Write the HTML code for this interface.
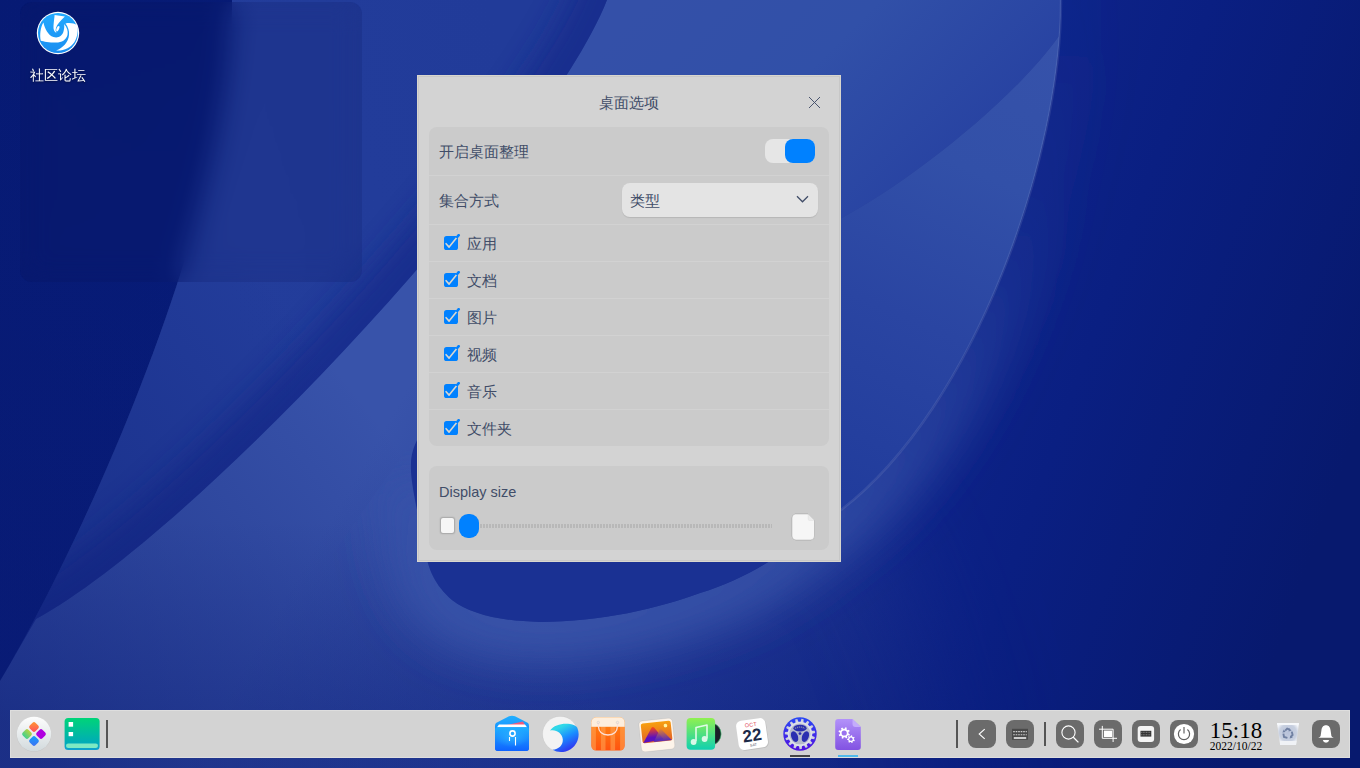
<!DOCTYPE html>
<html><head><meta charset="utf-8">
<style>
*{margin:0;padding:0;box-sizing:border-box}
html,body{width:1360px;height:768px;overflow:hidden;background:#081b78;font-family:"Liberation Sans",sans-serif}
#bg{position:absolute;left:0;top:0}
.abs{position:absolute}
.lbl{position:absolute;font-size:14.5px;line-height:20px;color:#414d68;white-space:nowrap}
.sep{position:absolute;left:429px;width:400px;height:1px;background:#d2d2d2}
.tb{position:absolute;top:720px;width:28px;height:28px;border-radius:8px;background:#6b6b6b}
</style></head><body>
<svg id="bg" width="1360" height="768" viewBox="0 0 1360 768">
<defs>
<linearGradient id="gBase" gradientUnits="userSpaceOnUse" x1="400" y1="400" x2="1000" y2="750">
<stop offset="0" stop-color="#3853aa"/><stop offset="1" stop-color="#0c2082"/>
</linearGradient>
<linearGradient id="gBot" gradientUnits="userSpaceOnUse" x1="0" y1="520" x2="0" y2="712">
<stop offset="0" stop-color="#0a1c78" stop-opacity="0"/><stop offset="1" stop-color="#0a1c78" stop-opacity="0.25"/>
</linearGradient>
<linearGradient id="gTop" gradientUnits="userSpaceOnUse" x1="650" y1="0" x2="880" y2="230">
<stop offset="0" stop-color="#3450a8"/><stop offset="0.5" stop-color="#3150a8"/><stop offset="1" stop-color="#2843a2"/>
</linearGradient>
<linearGradient id="gLens" gradientUnits="userSpaceOnUse" x1="1050" y1="40" x2="850" y2="500">
<stop offset="0" stop-color="#3652aa"/><stop offset="0.3" stop-color="#3250a8"/><stop offset="0.62" stop-color="#2a45a2"/><stop offset="1" stop-color="#213c9c"/>
</linearGradient>
<linearGradient id="gMed" gradientUnits="userSpaceOnUse" x1="200" y1="200" x2="520" y2="100">
<stop offset="0" stop-color="#233d9b"/><stop offset="1" stop-color="#213b99"/>
</linearGradient>
<linearGradient id="gDarkL" gradientUnits="userSpaceOnUse" x1="0" y1="0" x2="200" y2="600">
<stop offset="0" stop-color="#061a74"/><stop offset="1" stop-color="#071c7a"/>
</linearGradient>
<linearGradient id="gDarkR" gradientUnits="userSpaceOnUse" x1="880" y1="250" x2="1360" y2="420">
<stop offset="0" stop-color="#10268e"/><stop offset="0.45" stop-color="#0a1f82"/><stop offset="1" stop-color="#07196e"/>
</linearGradient>
<linearGradient id="gLL" gradientUnits="userSpaceOnUse" x1="420" y1="470" x2="40" y2="768">
<stop offset="0" stop-color="#0a1a70" stop-opacity="0"/><stop offset="1" stop-color="#0a1a70" stop-opacity="0.5"/>
</linearGradient>
<filter id="blur" filterUnits="userSpaceOnUse" x="-300" y="-300" width="2000" height="1400"><feGaussianBlur stdDeviation="50"/></filter>
<filter id="blurS" filterUnits="userSpaceOnUse" x="-300" y="-300" width="2000" height="1400"><feGaussianBlur stdDeviation="14"/></filter>
<linearGradient id="gTopMask" gradientUnits="userSpaceOnUse" x1="0" y1="120" x2="0" y2="330"><stop offset="0" stop-color="#fff"/><stop offset="1" stop-color="#000"/></linearGradient>
<mask id="mTop" maskUnits="userSpaceOnUse" x="0" y="-300" width="1700" height="1400"><rect x="0" y="-300" width="1700" height="1400" fill="url(#gTopMask)"/></mask>
<clipPath id="cDR"><path d="M1061,-200 L1600,-200 L1600,1000 L500,1000 L841,510 C976,407 1062,154 1061,0 Z"/></clipPath>
<clipPath id="cOut"><path d="M1061,-200 L1600,-200 L1600,1000 L300,1000 L300,600 L414,439 C411,480 418,510 424,545 C428,570 435,585 452,600 C470,614 500,621 540,622 C600,622 660,608 700,593 C760,575 800,540 841,510 C976,407 1062,154 1061,0 Z"/></clipPath>
<filter id="blurG" filterUnits="userSpaceOnUse" x="-300" y="-300" width="2000" height="1400"><feGaussianBlur stdDeviation="22"/></filter>
<linearGradient id="gGlow" gradientUnits="userSpaceOnUse" x1="0" y1="640" x2="0" y2="0"><stop offset="0" stop-color="#3a55aa" stop-opacity="0.9"/><stop offset="0.38" stop-color="#3652aa" stop-opacity="0.5"/><stop offset="0.7" stop-color="#2c48a6" stop-opacity="0.14"/><stop offset="1" stop-color="#2c48a6" stop-opacity="0.06"/></linearGradient>
<clipPath id="cMed"><path d="M232,0 L607,0 C548,151 198,531 36,619 L0,681 C84.5,540 235,205 232,0 Z"/></clipPath>
<mask id="mR" maskUnits="userSpaceOnUse" x="0" y="0" width="1360" height="768">
<path d="M600,-200 L1600,-200 L1600,1000 L1000,1000 C980,800 940,620 860,500 L600,500 Z" fill="#fff" filter="url(#blur)"/>
</mask>
</defs>
<rect width="1360" height="768" fill="url(#gBase)"/>
<path d="M607,0 L1061,0 L1059,36 C1013,101 907,184 840,219 L840,76 L560,76 Z" fill="url(#gTop)"/>
<path d="M1059,36 C1013,101 907,184 840,219 L840,510 L841,510 C976,407 1062,154 1061,0 Z" fill="url(#gLens)"/>
<rect x="0" y="520" width="1360" height="248" fill="url(#gBot)"/>
<path d="M232,0 L607,0 C548,151 198,531 36,619 L0,681 C84.5,540 235,205 232,0 Z" fill="url(#gMed)"/>
<g clip-path="url(#cMed)"><path d="M620,-40 L607,0 C548,151 198,531 36,619 L0,660" stroke="#15298a" stroke-width="70" fill="none" opacity="0.75" filter="url(#blurS)"/></g>
<path d="M0,0 L232,0 C235,205 84.5,540 0,681 Z" fill="url(#gDarkL)"/>
<rect x="0" y="0" width="1360" height="768" fill="url(#gLL)"/>
<g mask="url(#mR)"><path d="M1061,-200 L1600,-200 L1600,1000 L500,1000 L841,510 C976,407 1062,154 1061,0 Z" fill="url(#gDarkR)"/></g>
<g clip-path="url(#cOut)"><path d="M411,470 C411,480 418,510 424,545 C428,570 435,585 452,600 C470,614 500,621 540,622 C600,622 660,608 700,593 C760,575 800,540 841,510 C976,407 1062,154 1061,0 L1061,-60" stroke="url(#gGlow)" stroke-width="80" fill="none" filter="url(#blurG)"/></g>
<path d="M1061,0 C1062,154 976,407 841,510" stroke="#ffffff" stroke-opacity="0.09" stroke-width="2.5" fill="none"/>
<path d="M841,510 C800,540 760,575 700,593 C660,608 600,622 540,622 C500,621 470,614 452,600 C435,585 428,570 424,545 C418,512 410,482 411,464 C411,456 413,448 418,438 L600,420 Z" fill="#1a3193"/>
</svg>

<!-- top-left translucent collection area -->
<div class="abs" style="left:20px;top:2px;width:342px;height:280px;border-radius:12px;background:rgba(8,16,80,0.14);backdrop-filter:blur(14px);-webkit-backdrop-filter:blur(14px)"></div>

<!-- desktop icon -->
<svg class="abs" style="left:34px;top:9px" width="48" height="48" viewBox="0 0 48 48">
<defs><linearGradient id="dl" x1="0" y1="0" x2="0" y2="1"><stop offset="0" stop-color="#22aaff"/><stop offset="1" stop-color="#1a8ef0"/></linearGradient></defs>
<circle cx="24" cy="24" r="21.2" fill="#fff"/>
<circle cx="24" cy="24" r="20" fill="url(#dl)"/>
<path d="M20.6,5.9 L30.9,7.5 C26,12 23,15.5 22,19 C21.3,21.5 21.8,23 22.8,24 C20,23 19.2,20 19.5,17 C19.8,12 20.4,9 20.6,5.9 Z" fill="#fff"/>
<path d="M9.4,13.4 C11,20 14,26 19.5,28 C24,29.5 28.5,27 29.6,22 C30.3,19 30.5,17 30,15 C33,18 34.3,22 33.5,26 C32,31 28,33.5 22,33.5 C15,33.5 9.5,32.5 6.8,31.7 C5.5,26 6.5,18 9.4,13.4 Z" fill="#fff"/>
<path d="M43.1,16.25 C40.5,14.5 36,13.5 31.5,14.5 C34,17.5 35.5,22 35,26 C34.5,33 29,39 22,41.5 C30,42 37,38.5 40.5,33 C43.5,28 44.5,21 43.1,16.25 Z" fill="#fff"/>
<ellipse cx="23.8" cy="19.8" rx="1.3" ry="3" transform="rotate(25 23.8 19.8)" fill="#fff"/>
</svg>
<div class="abs" style="left:0;top:65px;width:115px;text-align:center;color:#fff;font-size:14px;line-height:20px;white-space:nowrap;text-shadow:0 1px 2px rgba(0,0,0,.5)">社区论坛</div>

<!-- dialog -->
<div class="abs" style="left:417px;top:75px;width:424px;height:487px;background:#d3d3d3;border:1px solid #d8d6ce;box-shadow:inset 0 0 0 1px #c7c7c7"></div>
<div class="lbl" style="left:417px;top:93px;width:424px;text-align:center">桌面选项</div>
<svg class="abs" style="left:808px;top:96px" width="13" height="13" viewBox="0 0 13 13"><path d="M1,1 L12,12 M12,1 L1,12" stroke="#414d68" stroke-width="0.95"/></svg>
<div class="abs" style="left:429px;top:127px;width:400px;height:319px;background:#cbcbcb;border-radius:8px"></div>
<div class="sep" style="top:175px"></div>
<div class="lbl" style="left:439px;top:142px">开启桌面整理</div>
<div class="abs" style="left:765px;top:139px;width:50px;height:24px;border-radius:8px;background:#e6e6e6"></div>
<div class="abs" style="left:785px;top:139px;width:30px;height:24px;border-radius:8px;background:#0081ff"></div>
<div class="lbl" style="left:439px;top:191px">集合方式</div>
<div class="abs" style="left:622px;top:183px;width:196px;height:34px;border-radius:8px;background:#e4e4e4;box-shadow:0 1px 1px rgba(0,0,0,.10)"></div>
<div class="lbl" style="left:630px;top:191px">类型</div>
<svg class="abs" style="left:796px;top:195px" width="13" height="9" viewBox="0 0 13 9"><path d="M1,1.2 L6.5,6.8 L12,1.2" fill="none" stroke="#414d68" stroke-width="1.3"/></svg>
<div class="sep" style="top:224px"></div>
<svg class="abs" style="left:443px;top:234px" width="18" height="18" viewBox="-1 -2 18 18"><rect x="0" y="0" width="14" height="14" rx="2.6" fill="#0081ff"/><path d="M2.1,7.7 L5.1,11.1 L13.4,0.8" fill="none" stroke="#d9d6cf" stroke-width="1.6" stroke-linecap="round" stroke-linejoin="round"/><path d="M13.2,1 L14.7,-0.8" stroke="#0081ff" stroke-width="2.6" stroke-linecap="round"/></svg>
<div class="lbl" style="left:467px;top:234px">应用</div>
<div class="sep" style="top:261px"></div>
<svg class="abs" style="left:443px;top:271px" width="18" height="18" viewBox="-1 -2 18 18"><rect x="0" y="0" width="14" height="14" rx="2.6" fill="#0081ff"/><path d="M2.1,7.7 L5.1,11.1 L13.4,0.8" fill="none" stroke="#d9d6cf" stroke-width="1.6" stroke-linecap="round" stroke-linejoin="round"/><path d="M13.2,1 L14.7,-0.8" stroke="#0081ff" stroke-width="2.6" stroke-linecap="round"/></svg>
<div class="lbl" style="left:467px;top:271px">文档</div>
<div class="sep" style="top:298px"></div>
<svg class="abs" style="left:443px;top:308px" width="18" height="18" viewBox="-1 -2 18 18"><rect x="0" y="0" width="14" height="14" rx="2.6" fill="#0081ff"/><path d="M2.1,7.7 L5.1,11.1 L13.4,0.8" fill="none" stroke="#d9d6cf" stroke-width="1.6" stroke-linecap="round" stroke-linejoin="round"/><path d="M13.2,1 L14.7,-0.8" stroke="#0081ff" stroke-width="2.6" stroke-linecap="round"/></svg>
<div class="lbl" style="left:467px;top:308px">图片</div>
<div class="sep" style="top:335px"></div>
<svg class="abs" style="left:443px;top:345px" width="18" height="18" viewBox="-1 -2 18 18"><rect x="0" y="0" width="14" height="14" rx="2.6" fill="#0081ff"/><path d="M2.1,7.7 L5.1,11.1 L13.4,0.8" fill="none" stroke="#d9d6cf" stroke-width="1.6" stroke-linecap="round" stroke-linejoin="round"/><path d="M13.2,1 L14.7,-0.8" stroke="#0081ff" stroke-width="2.6" stroke-linecap="round"/></svg>
<div class="lbl" style="left:467px;top:345px">视频</div>
<div class="sep" style="top:372px"></div>
<svg class="abs" style="left:443px;top:382px" width="18" height="18" viewBox="-1 -2 18 18"><rect x="0" y="0" width="14" height="14" rx="2.6" fill="#0081ff"/><path d="M2.1,7.7 L5.1,11.1 L13.4,0.8" fill="none" stroke="#d9d6cf" stroke-width="1.6" stroke-linecap="round" stroke-linejoin="round"/><path d="M13.2,1 L14.7,-0.8" stroke="#0081ff" stroke-width="2.6" stroke-linecap="round"/></svg>
<div class="lbl" style="left:467px;top:382px">音乐</div>
<div class="sep" style="top:409px"></div>
<svg class="abs" style="left:443px;top:419px" width="18" height="18" viewBox="-1 -2 18 18"><rect x="0" y="0" width="14" height="14" rx="2.6" fill="#0081ff"/><path d="M2.1,7.7 L5.1,11.1 L13.4,0.8" fill="none" stroke="#d9d6cf" stroke-width="1.6" stroke-linecap="round" stroke-linejoin="round"/><path d="M13.2,1 L14.7,-0.8" stroke="#0081ff" stroke-width="2.6" stroke-linecap="round"/></svg>
<div class="lbl" style="left:467px;top:419px">文件夹</div>

<div class="abs" style="left:429px;top:466px;width:400px;height:84px;background:#cbcbcb;border-radius:8px"></div>
<div class="lbl" style="left:439px;top:482px;font-size:14.5px">Display size</div>
<div class="abs" style="left:441px;top:518px;width:13px;height:15px;border-radius:2px;background:#f6f6f6;box-shadow:0 0 1.5px 0.5px rgba(0,0,0,.18)"></div>
<div class="abs" style="left:459px;top:514px;width:20px;height:24px;border-radius:9px;background:#0081ff"></div>
<div class="abs" style="left:480px;top:524px;width:292px;height:4px;background:repeating-linear-gradient(90deg,#b8b8b8 0,#b8b8b8 2px,transparent 2px,transparent 3px)"></div>
<svg class="abs" style="left:791px;top:513px" width="25" height="28" viewBox="0 0 25 28"><path d="M4.5,1 L17,1 L23.5,7.5 L23.5,23 Q23.5,27 19.5,27 L5,27 Q1,27 1,23 L1,5 Q1,1 4.5,1 Z" fill="#f6f6f6" stroke="rgba(0,0,0,.18)" stroke-width="0.8"/><path d="M17,1 L17,6 Q17,7.5 18.5,7.5 L23.5,7.5" fill="#ececec" stroke="rgba(0,0,0,.06)" stroke-width="0.6"/></svg>

<!-- dock -->
<div class="abs" style="left:10px;top:710px;width:1340px;height:48px;background:#d3d3d3;box-shadow:inset 0 0 0 1px #dedede"></div>
<!-- launcher -->
<svg class="abs" style="left:15px;top:715px" width="38" height="38" viewBox="0 0 38 38">
<defs><linearGradient id="lg1" x1="0" y1="0" x2="0" y2="1"><stop offset="0" stop-color="#fdfdfd"/><stop offset="1" stop-color="#d2dadd"/></linearGradient>
<linearGradient id="dOr" x1="0" y1="0" x2="1" y2="1"><stop offset="0" stop-color="#ff9a30"/><stop offset="1" stop-color="#ff4a60"/></linearGradient>
<linearGradient id="dGr" x1="0" y1="0" x2="0" y2="1"><stop offset="0" stop-color="#b8d440"/><stop offset="1" stop-color="#40d090"/></linearGradient>
<linearGradient id="dBl" x1="0" y1="0" x2="1" y2="1"><stop offset="0" stop-color="#10a0ff"/><stop offset="1" stop-color="#4070f0"/></linearGradient></defs>
<circle cx="19" cy="19.3" r="17.4" fill="#000" opacity="0.06"/>
<circle cx="19" cy="19" r="17.2" fill="url(#lg1)"/>
<rect x="15" y="8" width="8" height="8" rx="2" transform="rotate(45 19 12)" fill="url(#dOr)"/>
<rect x="8" y="15" width="8" height="8" rx="2" transform="rotate(45 12 19)" fill="url(#dGr)"/>
<rect x="22" y="15" width="8" height="8" rx="2" transform="rotate(45 26 19)" fill="#b000e0"/>
<rect x="15" y="22" width="8" height="8" rx="2" transform="rotate(45 19 26)" fill="url(#dBl)"/>
</svg>
<!-- file manager -->
<svg class="abs" style="left:64px;top:717px" width="36" height="34" viewBox="0 0 36 34">
<defs><linearGradient id="fm" x1="0" y1="0" x2="0" y2="1"><stop offset="0" stop-color="#00d478"/><stop offset="0.75" stop-color="#00adb5"/><stop offset="1" stop-color="#10a0d0"/></linearGradient></defs>
<rect x="0.6" y="1" width="35" height="32" rx="3.5" fill="url(#fm)"/>
<rect x="4.6" y="5" width="4.5" height="4.7" fill="#fff"/>
<rect x="4.6" y="15" width="4.5" height="4.2" fill="#fff"/>
<rect x="2" y="26.4" width="32" height="4.6" rx="2.3" fill="#7de9c3"/>
</svg>
<div class="abs" style="left:106px;top:720px;width:2px;height:28px;background:#555"></div>
<!-- wallet -->
<svg class="abs" style="left:494px;top:714px" width="36" height="38" viewBox="0 0 36 38">
<defs><linearGradient id="wl" x1="0" y1="0" x2="0" y2="1"><stop offset="0" stop-color="#20b0ff"/><stop offset="1" stop-color="#0f62ff"/></linearGradient>
<radialGradient id="wl2" cx="0.5" cy="0.5" r="0.5"><stop offset="0" stop-color="#30b8ff" stop-opacity="0.7"/><stop offset="1" stop-color="#30b8ff" stop-opacity="0"/></radialGradient></defs>
<path d="M2,9 L15,2.3 Q18,1 21,2.3 L34,9 Q35,10 35,12 L35,34 Q35,37 32,37 L4,37 Q1,37 1,34 L1,12 Q1,10 2,9 Z" fill="url(#wl)"/>
<path d="M4,13 L29,7.5 L32,13 Z" fill="#f05a7a"/>
<path d="M3,13.2 L5,10.6 L31,10.6 L33,13.2 Z" fill="#fff"/>
<rect x="1" y="13.2" width="34" height="23.8" rx="3" fill="url(#wl)"/>
<rect x="1" y="13.2" width="34" height="20" fill="url(#wl2)"/>
<circle cx="18.5" cy="19.5" r="2.6" fill="none" stroke="#fff" stroke-width="1.6"/>
<path d="M15.5,23 L15.5,27 M21.5,23 L21.5,31.5" stroke="#fff" stroke-width="1.1"/>
</svg>
<!-- browser -->
<svg class="abs" style="left:540px;top:712px" width="40" height="42" viewBox="0 0 40 42">
<defs><linearGradient id="br" x1="0.2" y1="0.2" x2="0.6" y2="1"><stop offset="0" stop-color="#30d8e8"/><stop offset="0.45" stop-color="#1a8cff"/><stop offset="1" stop-color="#3030f0"/></linearGradient></defs>
<circle cx="20.2" cy="22" r="17.6" fill="#f3f3f3" stroke="rgba(0,0,0,.08)" stroke-width="0.6"/>
<path d="M10,18.6 C14,13 22,11 30,12 C33,12.4 36,13.5 37.2,15.5 A17.6,17.6 0 0 1 12.5,37.8 C19,37 23,33 22.8,27.5 C22.5,21 15.5,17 10,18.6 Z" fill="url(#br)"/>
</svg>
<!-- app store -->
<svg class="abs" style="left:590px;top:716px" width="36" height="36" viewBox="0 0 36 36">
<defs><linearGradient id="as" x1="0" y1="0" x2="0" y2="1"><stop offset="0" stop-color="#ff8c10"/><stop offset="1" stop-color="#ff5010"/></linearGradient>
<clipPath id="asc"><rect x="1.3" y="1.2" width="33.4" height="33.4" rx="5"/></clipPath></defs>
<g clip-path="url(#asc)">
<rect x="0" y="0" width="36" height="36" fill="url(#as)"/>
<rect x="1.3" y="10" width="4.6" height="26" fill="#ffa050" opacity="0.6"/>
<rect x="10.9" y="10" width="4.6" height="26" fill="#ffa050" opacity="0.6"/>
<rect x="20.5" y="10" width="4.6" height="26" fill="#ffa050" opacity="0.6"/>
<rect x="30.1" y="10" width="4.6" height="26" fill="#ffa050" opacity="0.6"/>
<rect x="0" y="0" width="36" height="10.8" fill="#fdeedd"/>
</g>
<path d="M8.3,6.5 L8.3,10 Q9,19 18,19 Q27,19 27.5,10 L27.5,6.5" fill="none" stroke="#fde0d8" stroke-width="1.3"/>
<circle cx="8.3" cy="6.5" r="1.2" fill="none" stroke="#ccc" stroke-width="0.6"/>
<circle cx="27.5" cy="6.5" r="1.2" fill="none" stroke="#ccc" stroke-width="0.6"/>
</svg>
<!-- photos -->
<svg class="abs" style="left:638px;top:716px" width="38" height="36" viewBox="0 0 38 36">
<defs><linearGradient id="ph" x1="0" y1="0" x2="0" y2="1"><stop offset="0" stop-color="#f8a010"/><stop offset="1" stop-color="#e06028"/></linearGradient>
<linearGradient id="mt" x1="0" y1="0" x2="0" y2="1"><stop offset="0" stop-color="#ff4a10"/><stop offset="0.7" stop-color="#5a10c0"/></linearGradient>
<linearGradient id="mt2" x1="0" y1="0" x2="0" y2="1"><stop offset="0" stop-color="#e08030"/><stop offset="1" stop-color="#4020d0"/></linearGradient></defs>
<g transform="rotate(-6 19 18)">
<rect x="2" y="3.5" width="33.5" height="31" rx="4" fill="#fdf4ea" stroke="rgba(0,0,0,.10)" stroke-width="0.6"/>
<rect x="3.8" y="6" width="30" height="20" rx="2" fill="url(#ph)"/>
<path d="M4.5,25.5 L14,11.5 Q15.5,9.8 17,11.5 L25,24 Z" fill="url(#mt)"/>
<path d="M15,25.5 L22,14 Q23,12.8 24,14 L33,25.5 Z" fill="url(#mt2)" opacity="0.85"/>
<circle cx="28.3" cy="10.5" r="1.8" fill="#fff3a0"/>
</g>
</svg>
<!-- music -->
<svg class="abs" style="left:685px;top:716px" width="38" height="36" viewBox="0 0 38 36">
<defs><linearGradient id="mu" x1="0" y1="0" x2="0" y2="1"><stop offset="0" stop-color="#90f050"/><stop offset="1" stop-color="#10d0b0"/></linearGradient></defs>
<circle cx="24.5" cy="18" r="11.6" fill="#1a1d28" stroke="#40c870" stroke-width="0.6"/>
<rect x="1.6" y="2" width="28.5" height="31.7" rx="4" fill="url(#mu)"/>
<path d="M11,25.3 L11,11.5 L22,9 L22,22.5" fill="none" stroke="#e0fbe8" stroke-width="1.6" stroke-linejoin="round"/>
<circle cx="8.6" cy="26" r="2.9" fill="#d8f8e8"/>
<circle cx="19.6" cy="23" r="2.9" fill="#d8f8e8"/>
</svg>
<!-- calendar -->
<svg class="abs" style="left:733px;top:715px" width="38" height="38" viewBox="0 0 38 38">
<g transform="rotate(-8 19 19)">
<rect x="4.3" y="4.3" width="29.5" height="29.5" rx="5.5" fill="#000" opacity="0.10" transform="translate(0.6 0.8)"/>
<rect x="4.3" y="4.3" width="29.5" height="29.5" rx="5.5" fill="#fff"/>
<text x="19" y="11.6" text-anchor="middle" font-family="Liberation Sans" font-size="5.6" fill="#e04a58">OCT</text>
<text x="19" y="26.2" text-anchor="middle" font-family="Liberation Sans" font-weight="bold" font-size="17" fill="#1c2a48">22</text>
<text x="19" y="31.3" text-anchor="middle" font-family="Liberation Sans" font-size="3.6" fill="#445">SAT</text>
</g>
</svg>
<!-- settings -->
<svg class="abs" style="left:783px;top:717px" width="34" height="34" viewBox="0 0 34 34">
<defs><linearGradient id="st" x1="0" y1="0" x2="0" y2="1"><stop offset="0" stop-color="#2a48f4"/><stop offset="1" stop-color="#5010e0"/></linearGradient>
<radialGradient id="sg" cx="0.5" cy="0.5" r="0.5"><stop offset="0.6" stop-color="#eceef6"/><stop offset="1" stop-color="#c4c8d6"/></radialGradient></defs>
<circle cx="17" cy="17" r="16.7" fill="url(#st)"/>
<path d="M17.00,4.70 L17.62,4.72 L18.40,1.86 L20.66,2.25 L20.46,5.20 L22.00,5.76 L22.56,6.03 L24.43,3.74 L26.34,5.01 L24.96,7.62 L26.14,8.77 L26.54,9.24 L29.18,7.91 L30.41,9.85 L28.09,11.67 L28.70,13.20 L28.87,13.79 L31.83,13.65 L32.16,15.92 L29.29,16.64 L29.23,18.29 L29.15,18.90 L31.91,19.97 L31.29,22.18 L28.38,21.67 L27.65,23.15 L27.33,23.68 L29.41,25.78 L27.95,27.54 L25.49,25.90 L24.23,26.95 L23.72,27.30 L24.76,30.07 L22.71,31.09 L21.14,28.58 L19.56,29.03 L18.95,29.14 L18.78,32.10 L16.49,32.19 L16.07,29.27 L14.44,29.03 L13.84,28.89 L12.48,31.51 L10.36,30.67 L11.16,27.83 L9.77,26.95 L9.28,26.58 L6.97,28.42 L5.37,26.79 L7.27,24.52 L6.35,23.15 L6.05,22.61 L3.19,23.36 L2.39,21.21 L5.05,19.91 L4.77,18.29 L4.72,17.67 L1.80,17.19 L1.94,14.91 L4.90,14.80 L5.30,13.20 L5.51,12.62 L3.04,10.99 L4.10,8.96 L6.84,10.07 L7.86,8.77 L8.28,8.32 L6.69,5.83 L8.48,4.41 L10.54,6.53 L12.00,5.76 L12.57,5.53 L12.12,2.60 L14.34,2.03 L15.36,4.81 Z" fill="url(#sg)"/>
<circle cx="17" cy="17" r="10.6" fill="#b4b9cc"/>
<ellipse cx="17" cy="11.2" rx="6.6" ry="3.4" fill="#2a2eb0"/>
<ellipse cx="11.6" cy="19.6" rx="3.3" ry="5.6" transform="rotate(-22 11.6 19.6)" fill="#2a2eb0"/>
<ellipse cx="22.4" cy="19.6" rx="3.3" ry="5.6" transform="rotate(22 22.4 19.6)" fill="#2a2eb0"/>
<path d="M12,11.5 Q17,8.6 22,11.5" fill="none" stroke="#8088a8" stroke-width="1.4" stroke-dasharray="1.2 0.8"/>
<circle cx="17" cy="16.6" r="1.4" fill="#2a2eb0"/>
</svg>
<div class="abs" style="left:790px;top:755px;width:20px;height:2px;background:#454545"></div>
<!-- purple doc -->
<svg class="abs" style="left:834px;top:718px" width="28" height="34" viewBox="0 0 28 34">
<defs><linearGradient id="pd" x1="0" y1="0" x2="0" y2="1"><stop offset="0" stop-color="#b392fa"/><stop offset="1" stop-color="#8252e2"/></linearGradient></defs>
<path d="M4.2,1 L18.5,1 L26.8,9 L26.8,29 Q26.8,32 23.8,32 L4.2,32 Q1.2,32 1.2,29 L1.2,4 Q1.2,1 4.2,1 Z" fill="url(#pd)"/>
<path d="M18.5,1 L18.5,6 Q18.5,9 21.5,9 L26.8,9 Z" fill="#c4acfc"/>
<path d="M14.50,15.00 L14.47,15.51 L15.89,16.13 L15.37,17.63 L13.87,17.25 L13.24,18.04 L12.86,18.38 L13.42,19.82 L11.99,20.52 L11.20,19.18 L10.20,19.30 L9.69,19.27 L9.07,20.69 L7.57,20.17 L7.95,18.67 L7.16,18.04 L6.82,17.66 L5.38,18.22 L4.68,16.79 L6.02,16.00 L5.90,15.00 L5.93,14.49 L4.51,13.87 L5.03,12.37 L6.53,12.75 L7.16,11.96 L7.54,11.62 L6.98,10.18 L8.41,9.48 L9.20,10.82 L10.20,10.70 L10.71,10.73 L11.33,9.31 L12.83,9.83 L12.45,11.33 L13.24,11.96 L13.58,12.34 L15.02,11.78 L15.72,13.21 L14.38,14.00 Z" fill="#fff"/><circle cx="10.2" cy="15" r="2.6" fill="#9a72ee"/>
<path d="M19.90,21.20 L19.87,21.59 L20.80,22.07 L20.35,23.20 L19.35,22.90 L18.81,23.47 L18.49,23.69 L18.69,24.71 L17.52,25.06 L17.13,24.10 L16.35,24.03 L15.98,23.92 L15.31,24.71 L14.30,24.02 L14.82,23.11 L14.39,22.46 L14.24,22.10 L13.20,22.07 L13.12,20.85 L14.15,20.68 L14.39,19.94 L14.58,19.60 L13.95,18.77 L14.85,17.95 L15.63,18.65 L16.35,18.37 L16.74,18.31 L17.00,17.30 L18.21,17.49 L18.14,18.53 L18.81,18.93 L19.10,19.20 L20.05,18.77 L20.65,19.83 L19.80,20.43 Z" fill="#fff"/><circle cx="17" cy="21.2" r="1.6" fill="#9068ea"/>
</svg>
<div class="abs" style="left:838px;top:755px;width:20px;height:2px;background:#4fb8ec"></div>
<!-- tray -->
<div class="abs" style="left:956px;top:720px;width:2px;height:28px;background:#555"></div>
<div class="tb" style="left:968px"><svg width="28" height="28" viewBox="0 0 28 28"><path d="M16.7,9.1 L11.2,14 L16.7,18.9" fill="none" stroke="#fff" stroke-width="1.1"/></svg></div>
<div class="tb" style="left:1006px"><svg width="28" height="28" viewBox="0 0 28 28"><rect x="6" y="8.8" width="16" height="11" fill="#4a4a4a"/><path d="M7.2,11.6 H20.8 M7.2,14.8 H20.8" stroke="#cfcfcf" stroke-width="1.1" stroke-dasharray="1.6 0.9"/><rect x="7.8" y="17.2" width="12.4" height="1.6" fill="#eee"/></svg></div>
<div class="abs" style="left:1044px;top:722px;width:2px;height:24px;background:#555"></div>
<div class="tb" style="left:1056px"><svg width="28" height="28" viewBox="0 0 28 28"><circle cx="12.5" cy="12.5" r="6.6" fill="none" stroke="#fff" stroke-width="1.1"/><path d="M17.3,17.3 L22.4,22.4" stroke="#fff" stroke-width="1.3"/></svg></div>
<div class="tb" style="left:1094px"><svg width="28" height="28" viewBox="0 0 28 28"><rect x="9.9" y="10.6" width="8.2" height="6.4" fill="#fff"/><path d="M8.3,5.9 V18.3 H23 M5,9.2 H19.1 V22" fill="none" stroke="#fff" stroke-width="1"/></svg></div>
<div class="tb" style="left:1132px"><svg width="28" height="28" viewBox="0 0 28 28"><rect x="5.7" y="5.9" width="16.4" height="16.1" rx="3" fill="#f4f4f4"/><rect x="8.5" y="10.8" width="10.8" height="5.8" fill="#333"/><path d="M9.2,12.3 H18.6 M9.2,14.8 H18.6" stroke="#999" stroke-width="0.8" stroke-dasharray="1 0.6"/></svg></div>
<div class="tb" style="left:1170px"><svg width="28" height="28" viewBox="0 0 28 28"><circle cx="14" cy="14" r="10.1" fill="#fff"/><path d="M10.6,9.6 A5.6,5.6 0 1 0 17.4,9.6" fill="none" stroke="#606060" stroke-width="1.2"/><path d="M14,7 V13.6" stroke="#8a8a8a" stroke-width="1.6"/></svg></div>
<div class="abs" style="left:1205px;top:719px;width:62px;text-align:center;font-family:'Liberation Serif',serif;font-size:23px;line-height:24px;color:#000">15:18</div>
<div class="abs" style="left:1205px;top:739px;width:62px;text-align:center;font-family:'Liberation Serif',serif;font-size:11.5px;line-height:14px;color:#000">2022/10/22</div>
<svg class="abs" style="left:1276px;top:722px" width="24" height="24" viewBox="0 0 24 24">
<defs><radialGradient id="tr" cx="0.5" cy="0.45" r="0.55"><stop offset="0" stop-color="#b8c2da"/><stop offset="0.7" stop-color="#c8d0e0"/><stop offset="1" stop-color="#f4f6fa"/></radialGradient></defs>
<path d="M1,1 L23,1 L20,23 L4.2,23 Z" fill="url(#tr)"/>
<path d="M1,1 L23,1 L22.6,3 L1.3,3 Z" fill="#f6f8fb"/>
<path d="M4,19 L20.5,19 L20,23 L4.2,23 Z" fill="#f0f2f6"/>
<g fill="none" stroke="#7080a2" stroke-width="1.9"><path d="M9.2,8.6 L11.2,6.6 L13.6,7.6"/><path d="M15.8,9.6 L16.6,13 L14.6,15.2"/><path d="M11.4,15.8 L8,15 L7.4,11.6"/></g><g fill="#7080a2"><path d="M13.2,6.2 L15.6,8.4 L12.6,9.4 Z"/><path d="M16.8,15.6 L13.6,16.4 L14.4,13.4 Z"/><path d="M6.4,10.4 L7.8,7.6 L9.6,10 Z"/></g>
</svg>
<div class="tb" style="left:1312px"><svg width="28" height="28" viewBox="0 0 28 28"><path d="M14,5.3 C11,5.3 9.8,7.5 9.4,10.5 L8.6,16 Q8.2,17.4 6.2,17.7 L21.8,17.7 Q19.8,17.4 19.4,16 L18.6,10.5 C18.2,7.5 17,5.3 14,5.3 Z" fill="#fff"/><path d="M10.8,20 L17.2,20 Q16.6,22.7 14,22.7 Q11.4,22.7 10.8,20 Z" fill="#fff"/></svg></div>
</body></html>
